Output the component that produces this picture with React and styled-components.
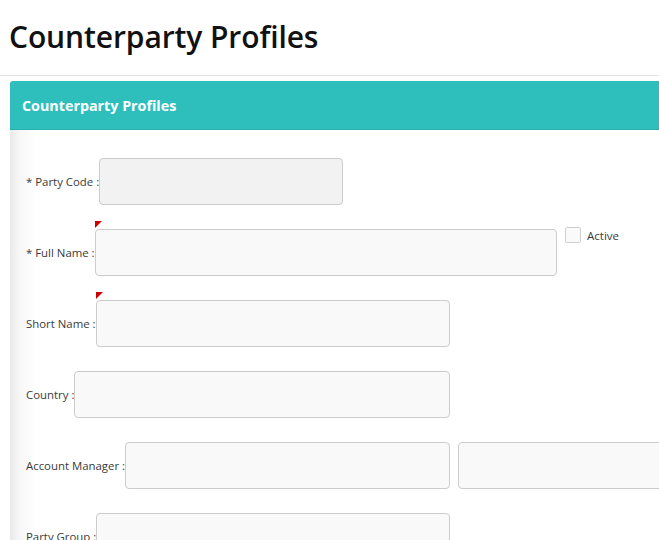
import React from "react";
import styled, { createGlobalStyle } from "styled-components";

const Global = createGlobalStyle`
  html, body { margin: 0; padding: 0; background: #fff; overflow: hidden; }
  body { font-family: "Open Sans", "Noto Sans", sans-serif; color: #333; }
  * { box-sizing: border-box; }
`;

const Page = styled.div`
  width: 659px;
  height: 540px;
  overflow: hidden;
`;

const Title = styled.h1`
  margin: 0;
  padding: 16px 0 0 9px;
  height: 76px;
  font-size: 30px;
  font-weight: 600;
  color: #111;
  letter-spacing: -0.1px;
  border-bottom: 1px solid #e2e2e2;
`;

const Panel = styled.section`
  margin: 5px 0 0 10px;
  width: 780px;
`;

const PanelHeader = styled.header`
  height: 49px;
  background: #2ebfbd;
  border-top-left-radius: 3px;
  border-bottom: 1px solid #29b0ae;
  display: flex;
  align-items: center;
  padding-left: 12px;
  color: #fff;
  font-size: 14.3px;
  font-weight: 700;
`;

const PanelBody = styled.div`
  background: linear-gradient(to right, #e9e9e9 0px, #f7f7f7 10px, #fff 26px);
  padding: 28px 0 0 16px;
  min-height: 460px;
  display: flex;
  flex-direction: column;
  gap: 24px;
`;

const Row = styled.div`
  display: flex;
  align-items: flex-start;
`;

const Field = styled.div`
  display: flex;
  align-items: center;
  width: ${(p) => p.$w}px;
  flex: none;
`;

const Label = styled.label`
  font-size: 11.4px;
  color: #3a3a3a;
  white-space: nowrap;
  flex: none;
`;

const InputWrap = styled.div`
  position: relative;
  flex: 1;
  height: 47px;
`;

const Input = styled.input`
  width: 100%;
  height: 100%;
  border: 1px solid #cccccc;
  border-radius: 4px;
  background: ${(p) => (p.disabled ? "#f2f2f2" : "#f9f9f9")};
  padding: 0 10px;
  font: inherit;
  outline: none;
`;

const Flag = styled.span`
  position: absolute;
  left: 0;
  top: -8px;
  width: 0;
  height: 0;
  border-top: 7px solid #cc0000;
  border-right: 7px solid transparent;
`;

const Extra = styled.div`
  margin-left: 8px;
  width: 240px;
  height: 47px;
  flex: none;
`;

const Check = styled.label`
  display: flex;
  align-items: center;
  gap: 6px;
  margin: -2px 0 0 8px;
  font-size: 11.5px;
  color: #3a3a3a;
`;

const Box = styled.span`
  width: 16px;
  height: 16px;
  border: 1px solid #cfcfcf;
  border-radius: 2px;
  background: #fafafa;
`;

export default function App() {
  return (
    <Page>
      <Global />
      <Title>Counterparty Profiles</Title>
      <Panel>
        <PanelHeader>Counterparty Profiles</PanelHeader>
        <PanelBody>
          <Row>
            <Field $w={317}>
              <Label>* Party Code :</Label>
              <InputWrap><Input disabled /></InputWrap>
            </Field>
          </Row>
          <Row>
            <Field $w={531}>
              <Label>* Full Name :</Label>
              <InputWrap><Flag /><Input /></InputWrap>
            </Field>
            <Check><Box />Active</Check>
          </Row>
          <Row>
            <Field $w={424}>
              <Label>Short Name :</Label>
              <InputWrap><Flag /><Input /></InputWrap>
            </Field>
          </Row>
          <Row>
            <Field $w={424}>
              <Label>Country :</Label>
              <InputWrap><Input /></InputWrap>
            </Field>
          </Row>
          <Row>
            <Field $w={424}>
              <Label>Account Manager :</Label>
              <InputWrap><Input /></InputWrap>
            </Field>
            <Extra><Input /></Extra>
          </Row>
          <Row>
            <Field $w={424}>
              <Label>Party Group :</Label>
              <InputWrap><Input /></InputWrap>
            </Field>
          </Row>
        </PanelBody>
      </Panel>
    </Page>
  );
}
